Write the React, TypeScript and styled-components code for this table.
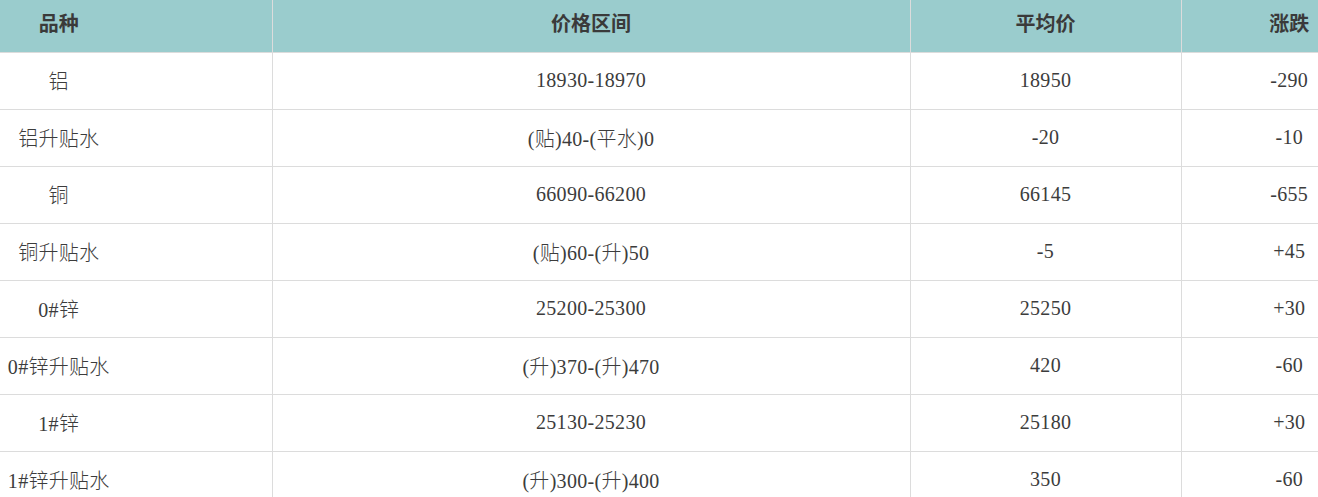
import React from "react";
import styled, { createGlobalStyle } from "styled-components";

const GlobalStyle = createGlobalStyle`
  html, body {
    margin: 0;
    padding: 0;
    background: #fff;
  }
  body {
    font-family: "Liberation Serif", "Noto Sans CJK SC", serif;
    color: #333;
  }
`;

const PriceTable = styled.table`
  width: 1318px;
  border-collapse: collapse;
  table-layout: fixed;
`;

const Col = styled.col<{ $w: number }>`
  width: ${(p) => p.$w}px;
`;

type Side = "first" | "mid" | "last";

// first/last columns are clipped in the source, so their text sits off-centre
const padFor = (side: Side) =>
  side === "first" ? "0 154px 0 0" : side === "last" ? "0 0 0 79px" : "0";

const HeadCell = styled.th<{ $side: Side }>`
  box-sizing: border-box;
  height: 52px;
  padding: ${(p) => padFor(p.$side)};
  padding-bottom: 6px;
  background-color: #9acccd;
  color: #3a3a3a;
  font-weight: bold;
  font-size: 20px;
  text-align: center;
  vertical-align: middle;
  border-left: ${(p) => (p.$side === "first" ? "none" : "1px solid #dcdcdc")};
  border-bottom: 1px solid #dcdcdc;
  white-space: nowrap;
`;

const BodyCell = styled.td<{ $side: Side }>`
  box-sizing: border-box;
  height: 57px;
  padding: ${(p) => padFor(p.$side)};
  text-align: center;
  font-size: 20px;
  font-weight: 300;
  letter-spacing: 0.3px;
  color: #3c3c3c;
  border-left: ${(p) => (p.$side === "first" ? "none" : "1px solid #dcdcdc")};
  border-bottom: 1px solid #dcdcdc;
  white-space: nowrap;
`;

const rows = [
  ["铝", "18930-18970", "18950", "-290"],
  ["铝升贴水", "(贴)40-(平水)0", "-20", "-10"],
  ["铜", "66090-66200", "66145", "-655"],
  ["铜升贴水", "(贴)60-(升)50", "-5", "+45"],
  ["0#锌", "25200-25300", "25250", "+30"],
  ["0#锌升贴水", "(升)370-(升)470", "420", "-60"],
  ["1#锌", "25130-25230", "25180", "+30"],
  ["1#锌升贴水", "(升)300-(升)400", "350", "-60"],
];

const heads = ["品种", "价格区间", "平均价", "涨跌"];
const sides: Side[] = ["first", "mid", "mid", "last"];
const widths = [272, 638, 271, 137];

function App() {
  return (
    <>
      <GlobalStyle />
      <PriceTable>
        <colgroup>
          {widths.map((w, i) => (
            <Col key={i} $w={w} />
          ))}
        </colgroup>
        <thead>
          <tr>
            {heads.map((h, i) => (
              <HeadCell key={h} $side={sides[i]}>
                {h}
              </HeadCell>
            ))}
          </tr>
        </thead>
        <tbody>
          {rows.map((row, idx) => (
            <tr key={idx}>
              {row.map((cell, i) => (
                <BodyCell key={i} $side={sides[i]}>
                  {cell}
                </BodyCell>
              ))}
            </tr>
          ))}
        </tbody>
      </PriceTable>
    </>
  );
}

export default App;
